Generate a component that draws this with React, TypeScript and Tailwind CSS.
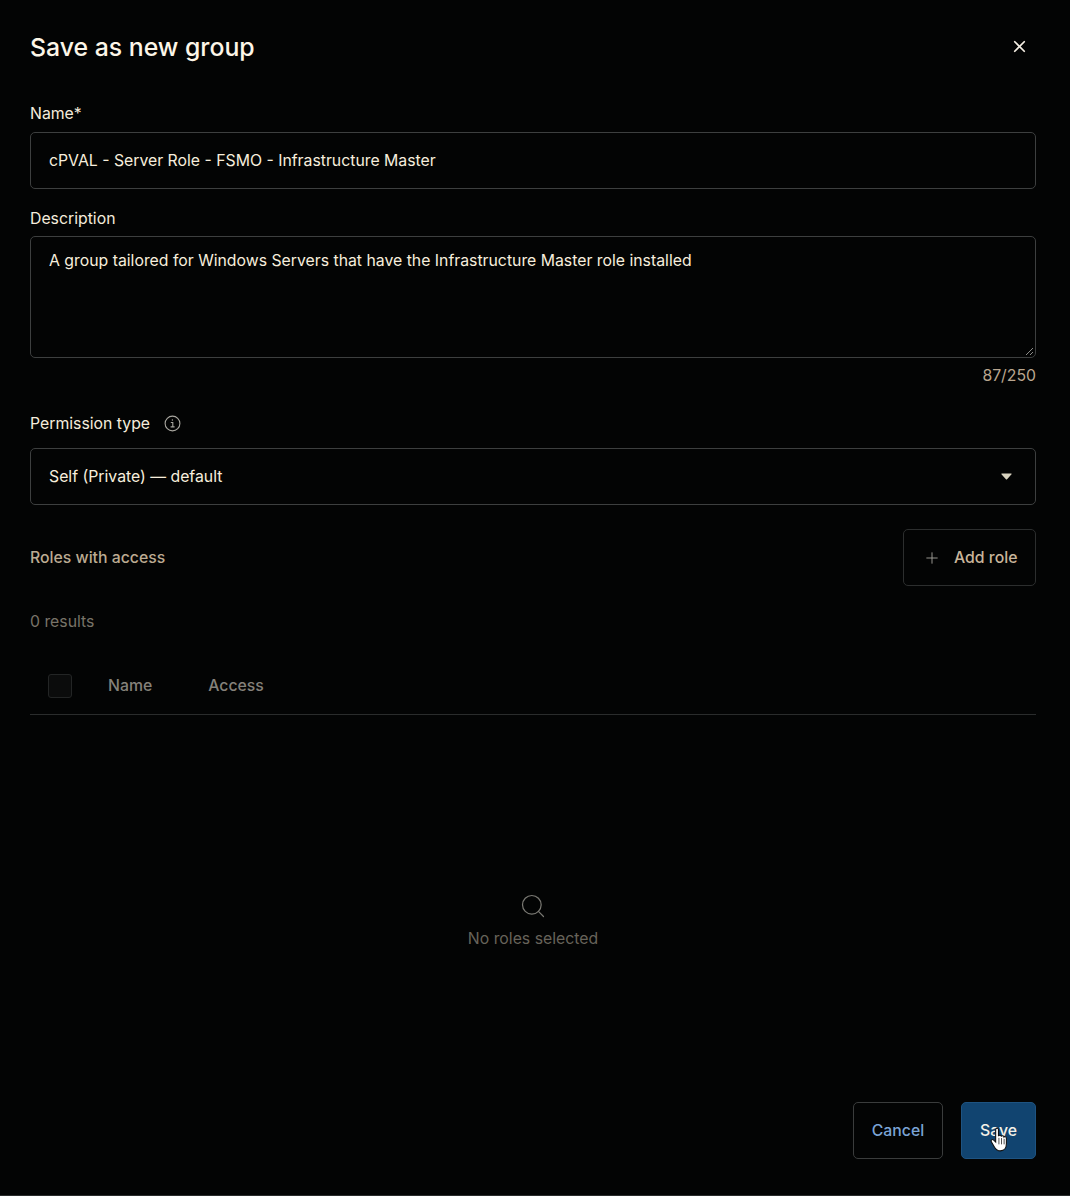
import { Plus, Search, X } from "lucide-react";

function Label({ children }: { children: React.ReactNode }) {
  return <div className="h-6 pt-[1px] text-[15.8px] leading-6 text-[#f5ecdc]">{children}</div>;
}

function Field({ className, children }: { className?: string; children: React.ReactNode }) {
  return (
    <div className={`relative rounded-[5px] border border-[#3d3f3f] px-[18px] text-[15.8px] text-[#f7eedd] ${className ?? ""}`}>
      {children}
    </div>
  );
}

export default function App() {
  return (
    <div className="relative flex h-[1196px] w-[1070px] flex-col overflow-hidden border-b border-[#2a2c2c] bg-[#030404] pr-[34px] pl-[30px] font-['Inter',sans-serif]">
      <div className="flex h-[94px] items-center justify-between">
        <h1 className="text-[24.8px] leading-8 font-medium text-[#fdf6e8]">Save as new group</h1>
        <X className="mr-[7px] mb-[2px] h-[19px] w-[19px] text-[#f5efe4]" strokeWidth={2.2} />
      </div>

      <div className="mt-[7px]">
        <Label>Name*</Label>
      </div>
      <Field className="mt-[7px] flex h-[57px] items-center">cPVAL - Server Role - FSMO - Infrastructure Master</Field>

      <div className="mt-[17px]">
        <Label>Description</Label>
      </div>
      <Field className="mt-[6px] h-[122px] pt-[12px] leading-6">
        A group tailored for Windows Servers that have the Infrastructure Master role installed
        <svg className="absolute right-[1px] bottom-[1px] h-[9px] w-[9px] text-[#8b8b88]" viewBox="0 0 9 9" fill="none" stroke="currentColor">
          <path d="M1 8 8 1M5 8 8 5" />
        </svg>
      </Field>
      <div className="mt-[6px] h-6 text-right text-[15.8px] leading-6 text-[#b9a68f]">87/250</div>

      <div className="mt-[23px] mb-[1px] flex h-6 items-center gap-[14px]">
        <Label>Permission type</Label>
        <svg className="mt-[1px] h-[17px] w-[17px] text-[#a8a69f]" viewBox="0 0 17 17" fill="none" stroke="currentColor" strokeWidth="1.1">
          <circle cx="8.5" cy="8.5" r="7.4" />
          <path d="M6.8 7.5h2v4.4M6.6 11.9h4" />
          <circle cx="8.4" cy="5" r="0.7" fill="currentColor" stroke="none" />
        </svg>
      </div>
      <Field className="mt-[12px] flex h-[57px] items-center justify-between">
        <span>Self (Private) — default</span>
        <svg className="mr-[5px] h-[7px] w-[11px] text-[#d8d2bf]" viewBox="0 0 12 8" fill="currentColor">
          <path d="M0.6 0.5h10.8a.5.5 0 0 1 .4.8L6.4 7.3a.5.5 0 0 1-.8 0L.2 1.3a.5.5 0 0 1 .4-.8Z" />
        </svg>
      </Field>

      <div className="mt-[24px] flex h-[57px] items-center justify-between">
        <span className="text-[15.8px] font-medium text-[#bcab92]">Roles with access</span>
        <button className="flex h-[57px] w-[133px] items-center rounded-[5px] border border-[#2c2e2e] pl-[19px] text-[15.8px] font-medium text-[#c9b59b]">
          <Plus className="h-[18px] w-[18px] text-[#a09e97]" strokeWidth={1.25} />
          <span className="ml-[13px]">Add role</span>
        </button>
      </div>

      <div className="mt-[24px] h-6 text-[15.8px] leading-6 text-[#787368]">0 results</div>

      <div className="mt-[27px] flex h-[54px] items-center border-b border-[#2a2c2c] pb-[4px] text-[15.8px] font-medium text-[#85817a]">
        <div className="ml-[18px] h-6 w-6 rounded-[3px] border border-[#232525] bg-[#0b0c0c]" />
        <span className="ml-[36px]">Name</span>
        <span className="ml-[56px]">Access</span>
      </div>

      <div className="mt-[177px] flex flex-col items-center">
        <Search className="h-[28px] w-[28px] text-[#7a7973]" strokeWidth={1.05} />
        <div className="mt-[7px] h-6 text-[15.8px] leading-6 text-[#67635a]">No roles selected</div>
      </div>

      <div className="mt-[151px] flex justify-end gap-[18px]">
        <button className="h-[57px] w-[90px] rounded-[5px] border border-[#3a3c3c] text-[15.8px] font-medium text-[#7ba4d6]">Cancel</button>
        <button className="h-[57px] w-[75px] rounded-[5px] border border-[#1e5381] bg-[#114470] text-[15.8px] font-medium text-[#f4f1e8]">Save</button>
      </div>

      {/* mouse pointer from the capture */}
      <svg className="absolute top-[1127px] left-[990px] h-[26px] w-[20px]" viewBox="0 0 18 24">
        <path
          d="M5 2.2c0-1.6 2.6-1.6 2.6 0v6.3c.3-1.2 2.5-1.1 2.6.3.4-1 2.3-.9 2.5.5.5-.8 2.2-.5 2.2 1v5.2c0 3.4-1.8 6.5-5.6 6.5-2.7 0-4-1.1-5.2-3.1L1 13.6c-.8-1.4 1-2.7 2.2-1.5L5 13.9V2.2Z"
          fill="#fff"
          stroke="#111"
          strokeWidth="1"
        />
        <path d="M8 10v6M10.4 10.2v5.8M12.8 11v5" stroke="#333" strokeWidth="0.8" />
      </svg>
    </div>
  );
}
